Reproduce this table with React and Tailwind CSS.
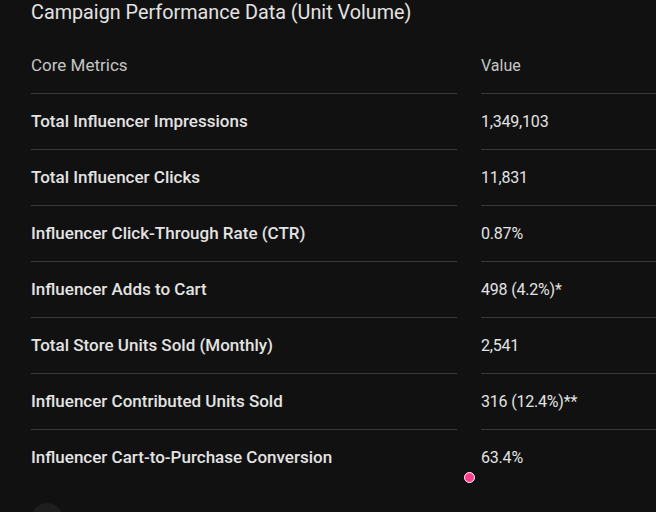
import React from 'react';

const rows = [
  ['Total Influencer Impressions', '1,349,103'],
  ['Total Influencer Clicks', '11,831'],
  ['Influencer Click-Through Rate (CTR)', '0.87%'],
  ['Influencer Adds to Cart', '498 (4.2%)*'],
  ['Total Store Units Sold (Monthly)', '2,541'],
  ['Influencer Contributed Units Sold', '316 (12.4%)**'],
  ['Influencer Cart-to-Purchase Conversion', '63.4%'],
];

export default function App() {
  return (
    <div
      className="h-[512px] w-[656px] overflow-hidden bg-[#111111] pl-[31px] text-[#e3e3e3]"
      style={{ fontFamily: 'Roboto, "Noto Sans", sans-serif' }}
    >
      <h2 className="-mt-[1px] text-[19.8px] leading-7 font-normal">Campaign Performance Data (Unit Volume)</h2>

      <div className="relative mt-[11px] w-[650px]">
        {/* header */}
        <div className="grid grid-cols-[426px_200px] gap-x-6">
          <div className="flex h-14 items-center border-b border-[#3a3a3a] text-[17px] text-[#c4c7c5]">Core Metrics</div>
          <div className="flex h-14 items-center border-b border-[#3a3a3a] text-base text-[#c4c7c5]">Value</div>
        </div>

        {rows.map(([label, value], i) => (
          <div key={label} className="grid grid-cols-[426px_200px] gap-x-6">
            <div
              className={`flex h-14 items-center text-[17px] font-medium ${
                i < rows.length - 1 ? 'border-b border-[#3a3a3a]' : ''
              }`}
            >
              {label}
            </div>
            <div
              className={`flex h-14 items-center text-base tracking-[-0.2px] ${
                i < rows.length - 1 ? 'border-b border-[#3a3a3a]' : ''
              }`}
            >
              {value}
            </div>
          </div>
        ))}

        {/* cursor dot */}
        <span className="absolute left-[433px] top-[434px] h-[11px] w-[11px] rounded-full border border-white bg-[#ff3d8b]"></span>
      </div>

      <div className="mt-[17px] h-8 w-8 rounded-full bg-[#1e1e1e]"></div>
    </div>
  );
}
